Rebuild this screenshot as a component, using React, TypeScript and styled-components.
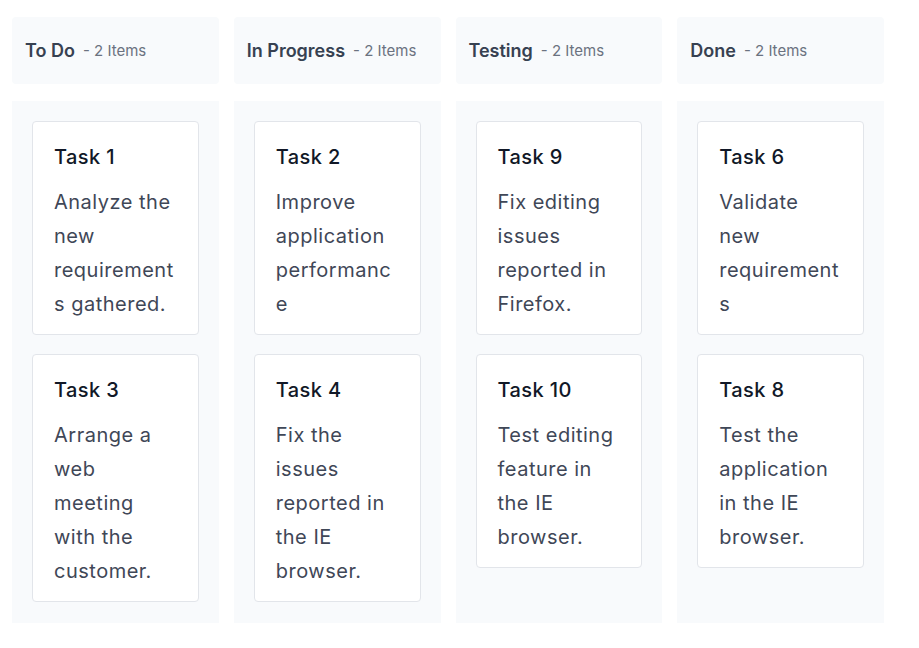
import styled, { createGlobalStyle } from "styled-components";

interface Task {
  id: number;
  text: string;
}

interface Lane {
  title: string;
  tasks: Task[];
}

const lanes: Lane[] = [
  {
    title: "To Do",
    tasks: [
      { id: 1, text: "Analyze the new requirements gathered." },
      { id: 3, text: "Arrange a web meeting with the customer." },
    ],
  },
  {
    title: "In Progress",
    tasks: [
      { id: 2, text: "Improve application performance" },
      { id: 4, text: "Fix the issues reported in the IE browser." },
    ],
  },
  {
    title: "Testing",
    tasks: [
      { id: 9, text: "Fix editing issues reported in Firefox." },
      { id: 10, text: "Test editing feature in the IE browser." },
    ],
  },
  {
    title: "Done",
    tasks: [
      { id: 6, text: "Validate new requirements" },
      { id: 8, text: "Test the application in the IE browser." },
    ],
  },
];

const GlobalStyle = createGlobalStyle`
  body {
    margin: 0;
    background: #ffffff;
    font-family: Inter, "Noto Sans", sans-serif;
  }
`;

const Board = styled.div`
  display: grid;
  width: 872px;
  grid-template-columns: repeat(4, 1fr);
  grid-template-rows: 67px auto;
  column-gap: 15px;
  row-gap: 17px;
  padding: 17px 0 0 12px;
`;

const LaneHeader = styled.div`
  background: #f8fafc;
  border-radius: 4px;
  display: flex;
  align-items: center;
  padding: 0 13px;
`;

const LaneTitle = styled.span`
  font-size: 18px;
  font-weight: 600;
  color: #374151;
`;

const LaneCount = styled.span`
  margin-left: 8px;
  font-size: 15px;
  color: #6b7280;
`;

const LaneBody = styled.div`
  background: #f8fafc;
  display: flex;
  flex-direction: column;
  gap: 19px;
  padding: 20px 20px 21px;
`;

const Card = styled.div`
  background: #ffffff;
  border: 1px solid #e2e5ea;
  border-radius: 4px;
  padding: 19px 21px 13px;
`;

const CardTitle = styled.div`
  font-size: 20px;
  font-weight: 500;
  letter-spacing: 0.4px;
  line-height: 32px;
  color: #111827;
  margin-bottom: 12px;
`;

const CardText = styled.div`
  font-size: 20px;
  letter-spacing: 0.5px;
  line-height: 34px;
  color: #3f4757;
  overflow-wrap: anywhere;
`;

export default function App() {
  return (
    <>
      <GlobalStyle />
      <Board>
        {lanes.map((lane) => (
          <LaneHeader key={lane.title}>
            <LaneTitle>{lane.title}</LaneTitle>
            <LaneCount>- {lane.tasks.length} Items</LaneCount>
          </LaneHeader>
        ))}
        {lanes.map((lane) => (
          <LaneBody key={lane.title}>
            {lane.tasks.map((task) => (
              <Card key={task.id}>
                <CardTitle>Task {task.id}</CardTitle>
                <CardText>{task.text}</CardText>
              </Card>
            ))}
          </LaneBody>
        ))}
      </Board>
    </>
  );
}
